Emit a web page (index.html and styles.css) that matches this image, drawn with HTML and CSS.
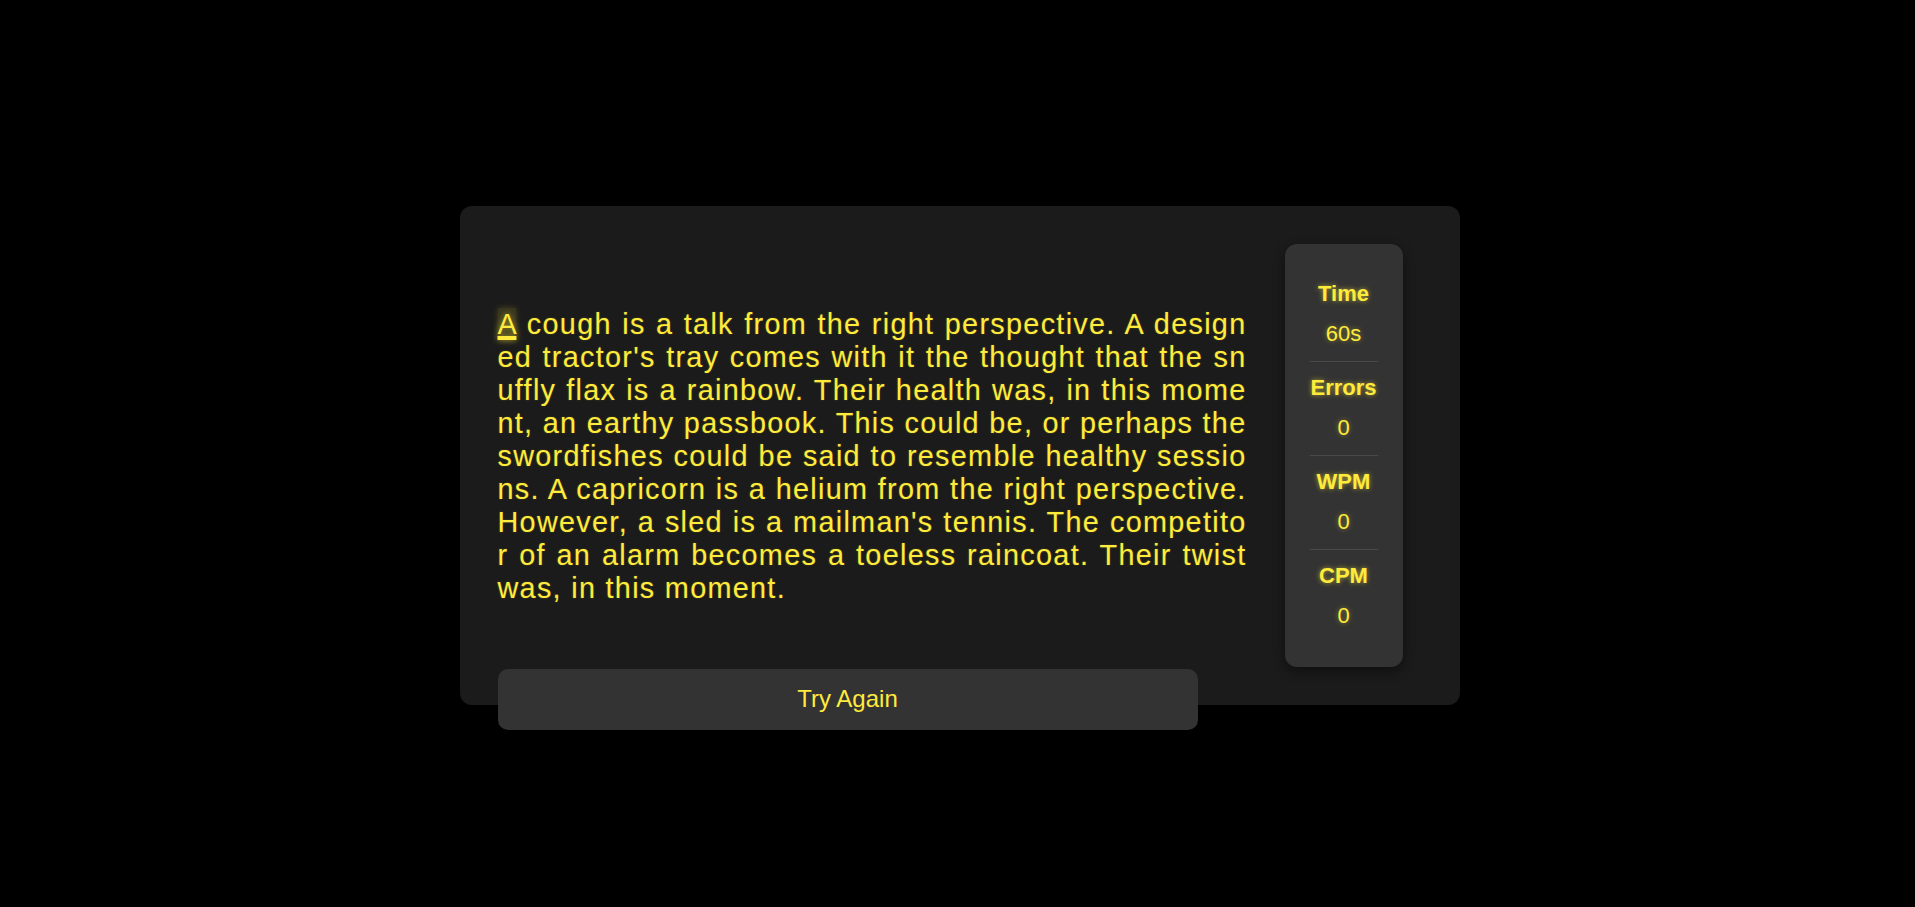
FILE: index.html
```html
<!DOCTYPE html>
<html lang="en">
<head>
<meta charset="utf-8">
<title>Typing Test</title>
<link rel="stylesheet" href="styles.css">
</head>
<body>
<main class="card">
  <p class="passage"><span class="current">A</span> cough is a talk from the right perspective. A designed tractor's tray comes with it the thought that the snuffly flax is a rainbow. Their health was, in this moment, an earthy passbook. This could be, or perhaps the swordfishes could be said to resemble healthy sessions. A capricorn is a helium from the right perspective. However, a sled is a mailman's tennis. The competitor of an alarm becomes a toeless raincoat. Their twist was, in this moment.</p>
  <aside class="stats">
    <div class="stat"><div class="label">Time</div><div class="value">60s</div></div>
    <div class="stat"><div class="label">Errors</div><div class="value">0</div></div>
    <div class="stat"><div class="label">WPM</div><div class="value">0</div></div>
    <div class="stat"><div class="label">CPM</div><div class="value">0</div></div>
  </aside>
  <button class="retry">Try Again</button>
</main>
</body>
</html>
```

FILE: styles.css
```css
html, body {
  margin: 0;
  height: 100%;
}
body {
  background: #000;
  display: flex;
  align-items: center;
  justify-content: center;
  padding: 3px 0 0 4px;
  box-sizing: border-box;
  font-family: "Liberation Sans", Arial, sans-serif;
  color: #ffeb3b;
}
.card {
  position: relative;
  width: 1000px;
  box-sizing: border-box;
  padding: 38px 57px 38px 38px;
  background: #1b1b1b;
  border-radius: 12px;
  display: flex;
  align-items: center;
  gap: 38px;
}
.passage {
  margin: 0;
  padding-top: 3px;
  width: 749px;
  flex-shrink: 0;
  font-size: 28.8px;
  letter-spacing: 1.3px;
  text-align: justify;
  word-break: break-all;
  text-shadow: 0 0 2px rgba(255, 235, 59, 0.25);
}
.current {
  background: rgba(255, 235, 59, 0.13);
  text-decoration: underline;
  text-decoration-thickness: 4px;
  text-underline-offset: 2px;
  box-shadow: 0 0 6px rgba(255, 235, 59, 0.2);
  text-shadow: 0 0 6px rgba(255, 235, 59, 0.6);
}
.stats {
  width: 118px;
  flex-shrink: 0;
  box-sizing: border-box;
  padding: 24px 25px;
  background: #333;
  border-radius: 12px;
  box-shadow: 0 4px 12px rgba(0, 0, 0, 0.45);
  text-align: center;
}
.stat {
  padding: 13.5px 0;
  border-bottom: 1px solid #4a4a4a;
}
.stat:last-child {
  border-bottom: none;
}
.label {
  font-size: 22px;
  font-weight: bold;
  text-shadow: 0 0 5px rgba(255, 235, 59, 0.6);
}
.value {
  margin-top: 14px;
  font-size: 22px;
  text-shadow: 0 0 5px rgba(255, 235, 59, 0.45);
}
.retry {
  position: absolute;
  left: 38px;
  bottom: -25px;
  width: 700px;
  height: 61px;
  border: none;
  border-radius: 10px;
  background: #333;
  color: #ffeb3b;
  font-family: "Liberation Sans", Arial, sans-serif;
  font-size: 24px;
  cursor: pointer;
}
```
